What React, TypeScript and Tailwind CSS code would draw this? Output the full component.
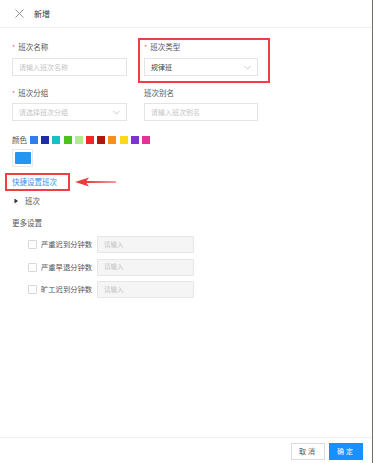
import React from 'react';

const swatches = [
  '#2b7fef',
  '#1d2fa3',
  '#18c0c2',
  '#4cc21b',
  '#b3ea8c',
  '#f2262f',
  '#a91a0f',
  '#fa8e1a',
  '#fbd81a',
  '#7a34d2',
  '#ea3096',
];

function Label({ text, required }: { text: string; required?: boolean }) {
  return (
    <div className="h-[10px] flex items-center text-[7.5px] leading-[10px] text-[#555]">
      {required && <span className="text-[#f56c6c] mr-[3px] text-[7px]">*</span>}
      {text}
    </div>
  );
}

function Chevron() {
  return (
    <svg width="7" height="5" viewBox="0 0 7 5" className="text-[#bbb]">
      <path d="M0.5 1 L3.5 4 L6.5 1" fill="none" stroke="currentColor" strokeWidth="0.8" />
    </svg>
  );
}

function Field({ placeholder, value, select, w }: { placeholder?: string; value?: string; select?: boolean; w: string }) {
  return (
    <div className={`${w} h-[18px] border border-[#e4e4e4] bg-white flex items-center justify-between px-[6px] text-[7px]`}>
      <span className={value ? 'text-[#444]' : 'text-[#c4c4c4]'}>{value ?? placeholder}</span>
      {select && <Chevron />}
    </div>
  );
}

function CheckRow({ text }: { text: string }) {
  return (
    <div className="flex items-center h-[17px]">
      <div className="w-[9px] h-[9px] border border-[#d8d8d8] bg-white rounded-[1px] ml-[16px]" />
      <span className="ml-[4px] w-[56px] text-[7.3px] text-[#555] whitespace-nowrap">{text}</span>
      <div className="w-[97px] h-[17px] border border-[#e6e6e6] bg-[#f5f5f5] rounded-[1px] flex items-center px-[6px] text-[6.5px] text-[#c4c4c4]">
        请输入
      </div>
    </div>
  );
}

export default function App() {
  return (
    <div
      className="w-[373px] h-[463px] flex bg-white overflow-hidden"
      style={{ fontFamily: '"Noto Sans CJK SC", "Noto Sans", sans-serif' }}
    >
      <div className="w-[372px] h-full flex flex-col">
        {/* header */}
        <div className="h-[28px] flex items-center border-b border-[#f0f0f0] shrink-0">
          <svg width="9" height="9" viewBox="0 0 9 9" className="ml-[15px] text-[#888]">
            <path d="M0.5 0.5 L8.5 8.5 M8.5 0.5 L0.5 8.5" stroke="currentColor" strokeWidth="0.9" />
          </svg>
          <span className="ml-[10px] text-[8px] text-[#333]">新增</span>
        </div>

        {/* body */}
        <div className="flex-1 pl-[12px] pt-[14px] relative">
          <div className="flex gap-[17px]">
            <div className="flex flex-col gap-[6px]">
              <Label text="班次名称" required />
              <Field w="w-[115px]" placeholder="请输入班次名称" />
            </div>
            <div className="flex flex-col gap-[6px] relative">
              <Label text="班次类型" required />
              <Field w="w-[114px]" value="规律班" select />
              <div className="absolute left-[-6px] top-[-4px] w-[132px] h-[45px] border-[2px] border-[#ef3e44] pointer-events-none" />
            </div>
          </div>

          <div className="flex gap-[17px] mt-[12px]">
            <div className="flex flex-col gap-[5px]">
              <Label text="班次分组" required />
              <Field w="w-[115px]" placeholder="请选择班次分组" select />
            </div>
            <div className="flex flex-col gap-[5px]">
              <Label text="班次别名" />
              <Field w="w-[114px]" placeholder="请输入班次别名" />
            </div>
          </div>

          <div className="flex items-center mt-[14px] h-[10px]">
            <span className="text-[7.5px] text-[#555] w-[18px]">颜色</span>
            <div className="flex gap-[3.2px]">
              {swatches.map((c) => (
                <div key={c} className="w-[8px] h-[8px]" style={{ background: c }} />
              ))}
            </div>
          </div>

          <div className="mt-[4px] w-[21px] h-[18px] border border-[#e8e8e8] flex items-center justify-center">
            <div className="w-[16px] h-[12px] bg-[#2196f3] rounded-[1px]" />
          </div>

          <div className="relative mt-[6px] h-[18px] flex items-center">
            <span className="text-[7.5px] text-[#3a8ee6]">快捷设置班次</span>
            <div className="absolute left-[-7px] top-0 w-[65px] h-[18px] border-[2px] border-[#ef3e44]" />
            <svg width="42" height="10" viewBox="0 0 42 10" className="absolute left-[63px] top-[4px]">
              <path d="M0 5 L14 0.5 L11.5 4 L41 4.5 L41 5.5 L11.5 6 L14 9.5 Z" fill="#ec3b3f" />
            </svg>
          </div>

          <div className="flex items-center mt-[5px] h-[10px]">
            <svg width="5" height="6" viewBox="0 0 5 6" className="ml-[2px]">
              <path d="M0.5 0.5 L4 3 L0.5 5.5 Z" fill="#333" />
            </svg>
            <span className="ml-[6px] text-[7.5px] text-[#555]">班次</span>
          </div>

          <div className="mt-[12px] h-[10px] flex items-center text-[7.5px] text-[#555]">更多设置</div>

          <div className="mt-[8px] flex flex-col gap-[5.5px]">
            <CheckRow text="严重迟到分钟数" />
            <CheckRow text="严重早退分钟数" />
            <CheckRow text="旷工迟到分钟数" />
          </div>
        </div>

        {/* footer */}
        <div className="h-[26px] border-t border-[#f0f0f0] flex items-start justify-end gap-[4px] pr-[9px] pt-[5px] shrink-0">
          <button className="w-[34px] h-[17px] border border-[#dcdcdc] bg-white text-[7px] text-[#555] tracking-[2px]">
            取消
          </button>
          <button className="w-[34px] h-[17px] bg-[#1890ff] text-[7px] text-white tracking-[2px]">
            确定
          </button>
        </div>
      </div>
      <div className="w-[1px] h-full bg-[#6e7466]" />
    </div>
  );
}
